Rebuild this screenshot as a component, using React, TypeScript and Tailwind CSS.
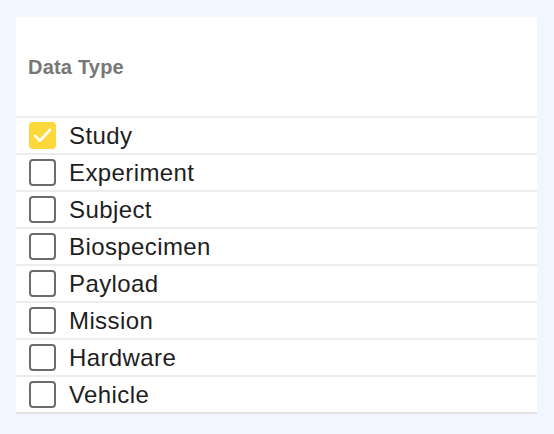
import React, { useState } from "react";

const TYPES = ["Study", "Experiment", "Subject", "Biospecimen", "Payload", "Mission", "Hardware", "Vehicle"];

function Box({ checked }: { checked: boolean }) {
  if (checked) {
    return (
      <span className="w-[27px] h-[27px] rounded-[4px] bg-[#fdd83a] flex items-center justify-center shrink-0">
        <svg width="21" height="21" viewBox="0 0 24 24" fill="none">
          <path d="M3.5 12.5l5.5 5.5L20.5 5.5" stroke="#fff" strokeWidth="3" strokeLinecap="round" strokeLinejoin="round" />
        </svg>
      </span>
    );
  }
  return <span className="w-[27px] h-[27px] rounded-[4px] border-[2.5px] border-[#6c6c6c] bg-white shrink-0" />;
}

export default function App() {
  const [selected, setSelected] = useState<string[]>(["Study"]);

  const toggle = (t: string) =>
    setSelected(s => (s.includes(t) ? s.filter(x => x !== t) : [...s, t]));

  return (
    <div className="w-[554px] h-[434px] bg-[#f2f6fe] pt-[17px] pl-[16px] font-['Liberation_Sans',Arial,sans-serif]">
      <div className="w-[521px] bg-white">
        {/* header */}
        <div className="h-[101px] flex items-center pl-[12px] border-b-2 border-[#ededed]">
          <span className="text-[20px] font-bold text-[#777] tracking-[0.2px]">Data Type</span>
        </div>

        {TYPES.map((t, i) => (
          <label
            key={t}
            onClick={() => toggle(t)}
            className={`h-[37px] flex items-center gap-[13px] pl-[13px] cursor-pointer border-b-2 ${
              i === TYPES.length - 1 ? "border-[#e3e3e3]" : "border-[#ededed]"
            }`}
          >
            <Box checked={selected.includes(t)} />
            <span className="text-[24px] leading-none text-[#1e1e1e] tracking-[0.4px]">{t}</span>
          </label>
        ))}
      </div>
    </div>
  );
}
